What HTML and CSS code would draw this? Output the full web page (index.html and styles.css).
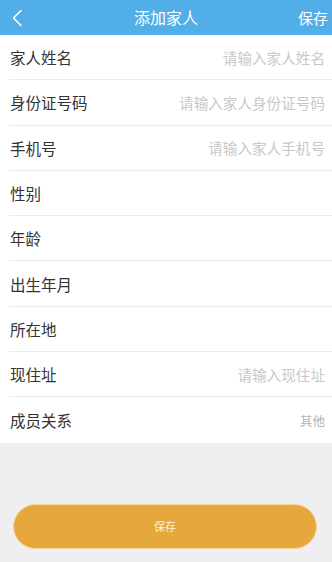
FILE: index.html
```html
<!DOCTYPE html>
<html lang="zh">
<head>
<meta charset="utf-8">
<link rel="stylesheet" href="styles.css">
</head>
<body>
<div class="page">
  <header class="topbar">
    <span class="back"><svg width="12" height="18" viewBox="0 0 12 18"><path d="M10 1.5 L2.5 9 L10 16.5" fill="none" stroke="#fff" stroke-width="1.6" stroke-linecap="round" stroke-linejoin="round"/></svg></span>
    <span class="title">添加家人</span>
    <span class="save">保存</span>
  </header>
  <ul class="form">
    <li class="row"><span class="label">家人姓名</span><span class="ph">请输入家人姓名</span></li>
    <li class="row"><span class="label">身份证号码</span><span class="ph">请输入家人身份证号码</span></li>
    <li class="row"><span class="label">手机号</span><span class="ph">请输入家人手机号</span></li>
    <li class="row"><span class="label">性别</span></li>
    <li class="row"><span class="label">年龄</span></li>
    <li class="row"><span class="label">出生年月</span></li>
    <li class="row"><span class="label">所在地</span></li>
    <li class="row"><span class="label">现住址</span><span class="ph">请输入现住址</span></li>
    <li class="row last"><span class="label">成员关系</span><span class="val">其他</span></li>
  </ul>
  <div class="footer">
    <button class="btn">保存</button>
  </div>
</div>
</body>
</html>
```
FILE: styles.css
```css
* { box-sizing: border-box; }
html, body { margin: 0; padding: 0; }
body {
  font-family: "Noto Sans CJK SC", "Noto Sans", sans-serif;
  background: #efeff1;
  width: 332px;
  height: 562px;
  overflow: hidden;
}
.topbar {
  height: 35px;
  background: #52aee6;
  display: flex;
  align-items: center;
  justify-content: space-between;
  padding: 0 4px 0 11px;
  color: #fff;
  position: relative;
}
.back { display: flex; align-items: center; width: 30px; }
.title {
  position: absolute;
  left: 0; right: 0;
  text-align: center;
  font-size: 16px;
  line-height: 35px;
  pointer-events: none;
}
.save { font-size: 15px; line-height: 35px; }
.form {
  list-style: none;
  margin: 0;
  padding: 0 0 0 9px;
  background: #fff;
}
.row {
  height: 45.3px;
  display: flex;
  align-items: center;
  justify-content: space-between;
  padding: 0 7px 0 1px;
  border-bottom: 1px solid #ebebeb;
}
.row.last { border-bottom: none; height: 45.6px; }
.label { font-size: 15.5px; color: #333; }
.ph { font-size: 14.6px; color: #c8c8c8; }
.val { font-size: 12.5px; color: #b4b4b4; }
.footer {
  padding: 61px 15px 0 13px;
}
.btn {
  display: block;
  width: 304px;
  height: 45px;
  border: 1px solid #f6d79a;
  border-radius: 23px;
  background: #e6a83c;
  color: #fdf3dc;
  font-family: "Noto Sans CJK SC", sans-serif;
  font-size: 11px;
  padding: 0;
}
```
